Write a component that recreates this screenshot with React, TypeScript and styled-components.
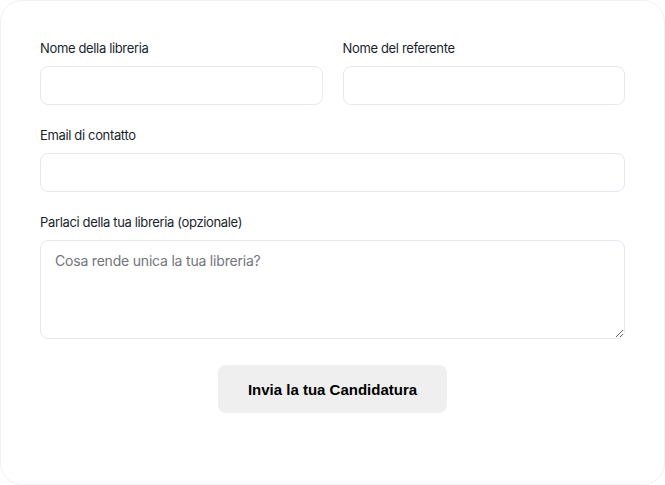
import styled, { createGlobalStyle } from "styled-components";

const GlobalStyle = createGlobalStyle`
  html, body {
    margin: 0;
    padding: 0;
    background: #ffffff;
  }
  * {
    box-sizing: border-box;
  }
`;

const App = () => {
  return (
    <>
      <GlobalStyle />
      <StyledCard>
        <StyledRow>
          <StyledField>
            <StyledLabel>Nome della libreria</StyledLabel>
            <StyledInput type="text" />
          </StyledField>
          <StyledField>
            <StyledLabel>Nome del referente</StyledLabel>
            <StyledInput type="text" />
          </StyledField>
        </StyledRow>
        <StyledField>
          <StyledLabel>Email di contatto</StyledLabel>
          <StyledInput type="email" />
        </StyledField>
        <StyledField>
          <StyledLabel>Parlaci della tua libreria (opzionale)</StyledLabel>
          <StyledTextarea placeholder="Cosa rende unica la tua libreria?" />
        </StyledField>
        <StyledActions>
          <StyledButton type="button">Invia la tua Candidatura</StyledButton>
        </StyledActions>
      </StyledCard>
    </>
  );
};

export default App;

const StyledCard = styled.div`
  width: 665px;
  height: 485px;
  padding: 37px 39px 0 39px;
  border: 1px solid #f0f1f4;
  border-radius: 22px;
  background: #ffffff;
  display: flex;
  flex-direction: column;
  gap: 20px;
  font-family: "Inter", "Noto Sans", sans-serif;
`;

const StyledRow = styled.div`
  display: grid;
  grid-template-columns: 1fr 1fr;
  gap: 20px;
`;

const StyledField = styled.div`
  display: flex;
  flex-direction: column;
`;

const StyledLabel = styled.label`
  font-size: 13px;
  line-height: 20px;
  height: 20px;
  margin-bottom: 8px;
  color: #1a1f2e;
  letter-spacing: -0.35px;
`;

const StyledInput = styled.input`
  height: 39px;
  border: 1px solid #e6e9f0;
  border-radius: 8px;
  background: #ffffff;
  padding: 0 14px;
  font-family: inherit;
  font-size: 14px;
  outline: none;
`;

const StyledTextarea = styled.textarea`
  height: 99px;
  border: 1px solid #e6e9f0;
  border-radius: 8px;
  background: #ffffff;
  padding: 10px 14px;
  font-family: inherit;
  font-size: 14px;
  line-height: 20px;
  color: #1a1f2e;
  outline: none;
  resize: vertical;
  letter-spacing: -0.2px;

  &::placeholder {
    color: #72757c;
  }
`;

const StyledActions = styled.div`
  display: flex;
  justify-content: center;
  margin-top: 6px;
`;

const StyledButton = styled.button`
  width: 229px;
  height: 48px;
  border: none;
  border-radius: 8px;
  background: #efefef;
  color: #000000;
  font-family: "Liberation Sans", Arial, sans-serif;
  font-weight: 700;
  font-size: 15px;
  cursor: pointer;
`;
